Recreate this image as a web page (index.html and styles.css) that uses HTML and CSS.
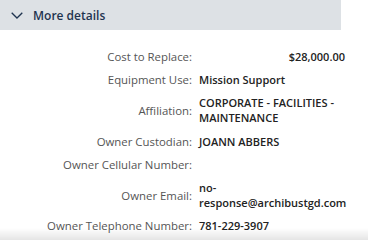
FILE: index.html
```html
<!DOCTYPE html>
<html>
<head>
<meta charset="utf-8">
<link rel="stylesheet" href="styles.css">
</head>
<body>
<div class="panel">
  <div class="header">
    <svg class="chev" width="12" height="7" viewBox="0 0 12 7"><path d="M0.7 0.7 L6 6 L11.3 0.7" fill="none" stroke="#1f3450" stroke-width="1.3"/></svg>
    <span class="title">More details</span>
  </div>
  <div class="details">
    <div class="label">Cost to Replace:</div><div class="value num">$28,000.00</div>
    <div class="label">Equipment Use:</div><div class="value">Mission Support</div>
    <div class="label">Affiliation:</div><div class="value">CORPORATE - FACILITIES - MAINTENANCE</div>
    <div class="label">Owner Custodian:</div><div class="value">JOANN ABBERS</div>
    <div class="label">Owner Cellular Number:</div><div class="value"></div>
    <div class="label">Owner Email:</div><div class="value">no-response@archibustgd.com</div>
    <div class="label">Owner Telephone Number:</div><div class="value">781-229-3907</div>
  </div>
</div>
<div class="shade"></div>
</body>
</html>
```
FILE: styles.css
```css
html, body {
  margin: 0;
  padding: 0;
  background: #fff;
}
body {
  font-family: "Open Sans", "Liberation Sans", sans-serif;
  width: 368px;
  height: 239px;
  overflow: hidden;
}
.header {
  width: 341px;
  height: 30px;
  background: #dde1e5;
  display: flex;
  align-items: center;
  padding-left: 11px;
  box-sizing: border-box;
  gap: 10px;
}
.chev {
  display: block;
  margin-top: 1px;
}
.title {
  font-size: 12px;
  font-weight: 600;
  color: #1f3450;
}
.details {
  display: grid;
  grid-template-columns: 192px 148px;
  column-gap: 7px;
  padding-top: 15px;
  align-items: center;
}
.label, .value {
  line-height: 15.5px;
  padding: 3.8px 0;
}
.label {
  font-size: 11.4px;
  text-align: right;
  color: #555;
}
.value {
  font-size: 11px;
  font-weight: 600;
  color: #222;
  min-height: 15.5px;
}
.value.num {
  text-align: right;
  padding-right: 2px;
}
.shade {
  position: fixed;
  left: 0;
  right: 0;
  bottom: 0;
  height: 12px;
  background: linear-gradient(rgba(0,0,0,0), rgba(0,0,0,0.1));
}
```
